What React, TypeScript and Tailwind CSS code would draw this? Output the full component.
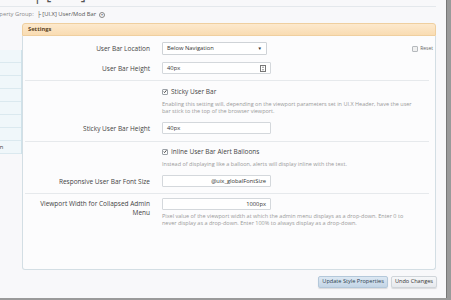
import React from 'react';

const Label = ({ children }: { children: React.ReactNode }) => (
  <div className="w-[125px] shrink-0 text-right text-[6.5px] leading-[9px] text-[#444]">{children}</div>
);

const TextBox = ({ value, right, spinner }: { value: string; right?: boolean; spinner?: boolean }) => (
  <div
    className={`flex h-[12px] w-[109px] items-center rounded-[1px] border border-[#d4d8dc] bg-white px-[4px] text-[5.8px] text-[#333] ${
      right ? 'justify-end' : 'justify-between'
    }`}
  >
    <span>{value}</span>
    {spinner && (
      <svg width="6" height="7" viewBox="0 0 6 7" className="shrink-0">
        <rect x="0.5" y="0.5" width="5" height="6" fill="#fff" stroke="#777" />
        <path d="M1.8 2.6 L3 1.6 L4.2 2.6 Z M1.8 4.4 L3 5.4 L4.2 4.4 Z" fill="#555" />
      </svg>
    )}
  </div>
);

const Check = ({ label }: { label: string }) => (
  <div className="flex h-[9px] items-center gap-[3px]">
    <span className="flex h-[6px] w-[6px] items-center justify-center rounded-[1px] border border-[#9aa0a6] bg-white">
      <svg width="5" height="5" viewBox="0 0 5 5">
        <path d="M0.8 2.6 L2 3.8 L4.3 0.9" fill="none" stroke="#333" strokeWidth="1.1" />
      </svg>
    </span>
    <span className="text-[6.5px] text-[#444]">{label}</span>
  </div>
);

const Desc = ({ children }: { children: React.ReactNode }) => (
  <div className="text-[5.5px] leading-[7px] text-[#9a9a9a]">{children}</div>
);

const Sep = ({ mt }: { mt: string }) => <div className={`${mt} mr-[4px] h-px bg-[#e6e9ec]`} />;

export default function App() {
  return (
    <div className="flex h-[300px] w-[451px] flex-col overflow-hidden bg-[#f8f8fa] font-['Open_Sans',sans-serif]">
      <div className="flex h-[298px]">
        <div className="flex w-[446px] flex-col">
          {/* Title (scrolled off the top) */}
          <div className="mr-[10px] flex h-[7px] items-end overflow-hidden border-b border-[#e4e8ec] pl-[33px]">
            <span className="mb-[4px] text-[16px] leading-none text-[#555]">| [UI.X]</span>
          </div>

          {/* Property group */}
          <div className="mt-[3px] flex h-[9px] items-center gap-[3px] whitespace-nowrap text-[5.8px] text-[#888]">
            <span className="-ml-[10px]">Property Group:</span>
            <span className="text-[#555]">├ [UI.X] User/Mod Bar</span>
            <span className="flex h-[6px] w-[6px] items-center justify-center rounded-full border border-[#888] text-[4px] leading-none">
              ▾
            </span>
          </div>

          <div className="mt-[4px] flex">
            {/* Side list */}
            <div className="mt-[27px] w-[22px] shrink-0 overflow-hidden">
              <div className="border-r border-[#cfe2ea]">
                {Array.from({ length: 7 }).map((_, i) => (
                  <div key={i} className="h-[13px] border-b border-[#dbe9ef] bg-[#f0f7fa]" />
                ))}
                <div className="flex h-[13px] items-center border-b border-[#dbe9ef] bg-[#f0f7fa]">
                  <span className="-ml-[17px] whitespace-nowrap text-[5.8px] text-[#444]">Balloon</span>
                </div>
              </div>
            </div>

            {/* Panel */}
            <div className="flex w-[414px] flex-col">
              <div className="flex h-[13px] items-center rounded-t-[3px] border border-[#efcf9f] bg-gradient-to-b from-[#fde9cd] to-[#f9dcb2] pl-[5px] text-[5.8px] font-bold text-[#5e4526]">
                Settings
              </div>
              <div className="flex h-[234px] flex-col rounded-b-[3px] border border-t-0 border-[#d3dee4] bg-[#fcfcfd] pl-[2px] pr-[2px]">
                {/* User Bar Location */}
                <div className="mt-[6px] flex items-center gap-[12px]">
                  <Label>User Bar Location</Label>
                  <div className="flex h-[13px] w-[105px] items-center justify-between rounded-[1px] border border-[#cfd3d7] bg-white pl-[4px] pr-[4px] text-[5.8px] text-[#333]">
                    <span>Below Navigation</span>
                    <span className="text-[4.5px]">▼</span>
                  </div>
                  <div className="ml-auto flex items-center gap-[2px]">
                    <span className="h-[6px] w-[6px] rounded-[1px] border border-[#b5b9bd] bg-[#f0f0f0]" />
                    <span className="text-[5px] text-[#666]">Reset</span>
                  </div>
                </div>

                {/* User Bar Height */}
                <div className="mt-[7px] flex items-center gap-[12px]">
                  <Label>User Bar Height</Label>
                  <TextBox value="40px" spinner />
                </div>

                <Sep mt="mt-[6px]" />

                {/* Sticky User Bar */}
                <div className="mt-[6px] flex gap-[12px]">
                  <div className="w-[125px] shrink-0" />
                  <div className="flex flex-col">
                    <Check label="Sticky User Bar" />
                    <div className="mt-[5px]">
                      <Desc>
                        Enabling this setting will, depending on the viewport parameters set in UI.X Header, have the user
                        <br />
                        bar stick to the top of the browser viewport.
                      </Desc>
                    </div>
                  </div>
                </div>

                <div className="mt-[7px] flex items-center gap-[12px]">
                  <Label>Sticky User Bar Height</Label>
                  <TextBox value="40px" />
                </div>

                <Sep mt="mt-[7px]" />

                {/* Inline alerts */}
                <div className="mt-[5px] flex gap-[12px]">
                  <div className="w-[125px] shrink-0" />
                  <div className="flex flex-col">
                    <Check label="Inline User Bar Alert Balloons" />
                    <div className="mt-[5px]">
                      <Desc>Instead of displaying like a balloon, alerts will display inline with the text.</Desc>
                    </div>
                  </div>
                </div>

                <div className="mt-[7px] flex items-center gap-[12px]">
                  <Label>Responsive User Bar Font Size</Label>
                  <TextBox value="@uix_globalFontSize" right />
                </div>

                <Sep mt="mt-[6px]" />

                {/* Viewport width */}
                <div className="mt-[4px] flex items-start gap-[12px]">
                  <div className="w-[125px] shrink-0 pl-[8px] pt-[1px] text-right text-[6.5px] leading-[9px] text-[#444]">
                    Viewport Width for Collapsed Admin Menu
                  </div>
                  <div className="flex flex-col">
                    <TextBox value="1000px" right />
                    <div className="mt-[3px]">
                      <Desc>
                        Pixel value of the viewport width at which the admin menu displays as a drop-down. Enter 0 to
                        <br />
                        never display as a drop-down. Enter 100% to always display as a drop-down.
                      </Desc>
                    </div>
                  </div>
                </div>
              </div>

              {/* Buttons */}
              <div className="mt-[6px] flex justify-end gap-[3px]">
                <button className="h-[12px] rounded-[2px] border border-[#b4c8da] bg-gradient-to-b from-[#dce8f3] to-[#c3d5e6] px-[3px] text-[5.6px] leading-none text-[#2c3e50] shadow-[0_1px_1px_rgba(0,0,0,0.12)]">
                  Update Style Properties
                </button>
                <button className="-mr-[1px] h-[12px] rounded-[2px] border border-[#d0d5da] bg-gradient-to-b from-[#f6f7f9] to-[#e6e9ed] px-[3px] text-[5.6px] leading-none text-[#333] shadow-[0_1px_1px_rgba(0,0,0,0.12)]">
                  Undo Changes
                </button>
              </div>
            </div>
          </div>
        </div>

        {/* Scrollbar edge */}
        <div className="w-[5px] border-l border-[#777] bg-[#9a9a9a]" />
      </div>
      <div className="h-[2px] bg-[#9a9a9a]" />
    </div>
  );
}
